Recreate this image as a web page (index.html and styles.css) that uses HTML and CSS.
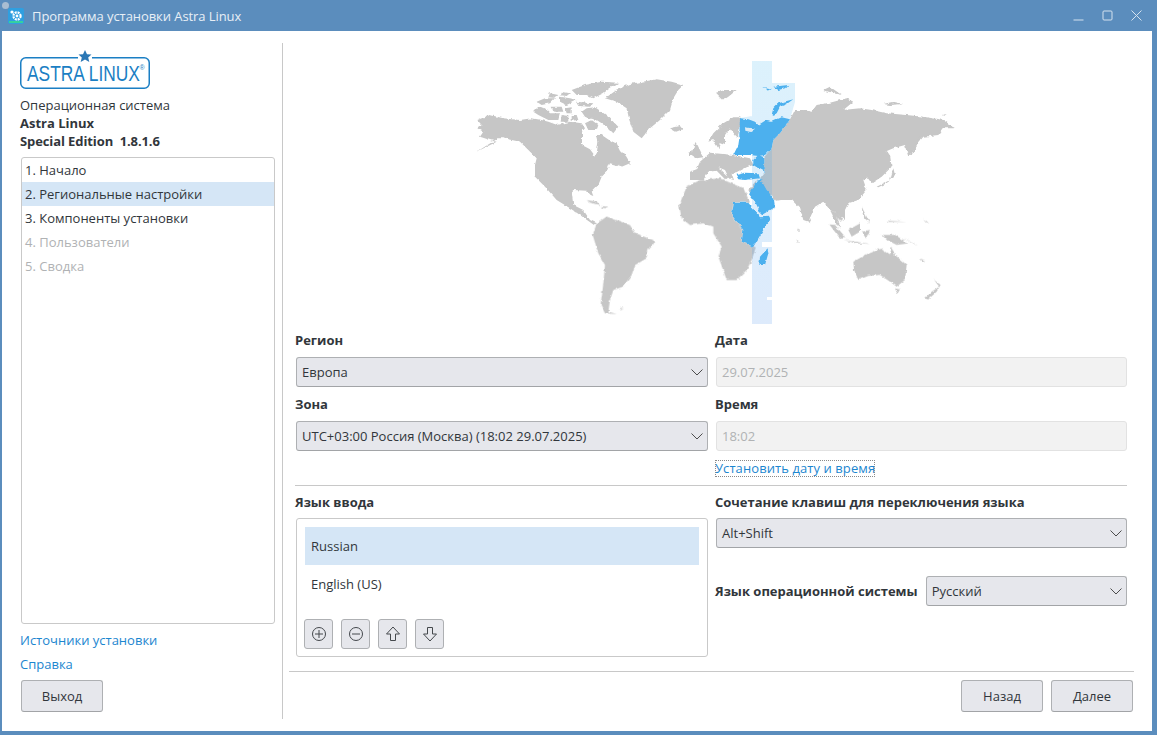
FILE: index.html
```html
<!DOCTYPE html>
<html lang="ru">
<head>
<meta charset="utf-8">
<title>Программа установки Astra Linux</title>
<link rel="stylesheet" href="styles.css">
</head>
<body>
<div class="window">
  <header class="titlebar">
    <span class="corner-dot"></span>
    <svg class="app-icon" viewBox="0 0 16 16" width="16" height="16">
      <rect width="16" height="16" rx="2" fill="#2f9fe0"/>
      <rect x="1" y="13" width="14" height="2" fill="#35d0a0"/>
      <circle cx="9" cy="8" r="3.600" fill="none" stroke="#fff" stroke-width="2.200" stroke-dasharray="2 0.850"/>
      <circle cx="9" cy="8" r="1.400" fill="#fff"/>
      <circle cx="4" cy="4" r="1.600" fill="#fff"/>
    </svg>
    <span class="title">Программа установки Astra Linux</span>
    <div class="controls">
      <svg viewBox="0 0 11 11" width="11" height="11"><path d="M0.500 10h10" stroke="#d5e2ef" fill="none"/></svg>
      <svg viewBox="0 0 11 11" width="11" height="11"><rect x="1" y="1" width="9" height="9" rx="1" stroke="#d5e2ef" fill="none"/></svg>
      <svg viewBox="0 0 11 11" width="11" height="11"><path d="M0.500 0.500l10 10M10.500 0.500l-10 10" stroke="#d5e2ef" fill="none"/></svg>
    </div>
  </header>
  <div class="content">
    <aside class="sidebar">
      <svg class="logo" viewBox="0 0 130 40" width="130" height="40">
        <rect x="0.750" y="7.750" width="128.500" height="30.500" rx="5" fill="#fff" stroke="#1b7fc4" stroke-width="1.500"/>
        <rect x="58" y="5" width="14" height="6" fill="#fff"/>
        <polygon points="65,0 67,4.200 71.500,4.500 68.200,7.500 69.300,12 65,9.600 60.700,12 61.800,7.500 58.500,4.500 63,4.200" fill="#2a77b5"/>
        <text class="logo-text" transform="translate(7 31) scale(.79 1)">ASTRA LINUX</text>
        <text class="logo-reg" x="119.500" y="20">®</text>
      </svg>
      <div class="product">
        <div>Операционная система</div>
        <div class="strong">Astra Linux</div>
        <div class="strong tight">Special Edition&nbsp; 1.8.1.6</div>
      </div>
      <ul class="steps">
        <li>1. Начало</li>
        <li class="active">2. Региональные настройки</li>
        <li>3. Компоненты установки</li>
        <li class="off">4. Пользователи</li>
        <li class="off">5. Сводка</li>
      </ul>
      <a class="link side-link">Источники установки</a>
      <a class="link side-link">Справка</a>
      <button class="btn exit">Выход</button>
    </aside>
    <main class="main">
      <div class="map-wrap">
        <svg class="map" viewBox="460 50 510 280" width="510" height="280">
          <defs>
            <linearGradient id="bandfill" x1="0" y1="0" x2="0" y2="1">
              <stop offset="0" stop-color="#45b6ee"/>
              <stop offset="1" stop-color="#4a90ea"/>
            </linearGradient>
            <filter id="rough" x="-2%" y="-2%" width="104%" height="104%" color-interpolation-filters="sRGB">
              <feTurbulence type="fractalNoise" baseFrequency="0.22" numOctaves="2" seed="4" result="n"/>
              <feDisplacementMap in="SourceGraphic" in2="n" scale="3.500" xChannelSelector="R" yChannelSelector="G"/>
              <feGaussianBlur stdDeviation="0.300"/>
            </filter>
          </defs>
          <g class="land">
            <g transform="translate(470 70) scale(.33333)">
              <path d="M22 150L60 135L100 145L150 150L185 145L215 150L235 155L262 165L300 155L335 160L345 175L336 185L336 225L360 238L375 258L380 250L385 215L380 195L395 195L425 215L440 220L450 240L468 258L480 278L460 278L440 285L420 280L410 305L395 320L385 345L365 365L370 378L362 375L350 362L310 360L305 365L310 405L340 420L360 450L380 460L372 465L330 435L300 415L260 390L225 350L195 320L195 285L200 265L185 250L150 215L100 205L85 205L20 245L80 215L60 210L30 200L40 185L22 175L35 165Z"/>
              <path d="M190 125L205 110L225 115L240 130L270 130L265 150L235 150L205 135Z"/>
              <path d="M335 125L350 115L375 112L395 125L415 140L445 170L430 190L415 175L395 160L380 150L355 145L345 140Z"/>
              <path d="M200 95L225 85L255 85L240 100L215 105Z"/>
              <path d="M270 80L300 85L320 90L290 105L270 95Z"/>
              <path d="M305 60L345 45L395 35L445 38L420 55L400 70L370 85L350 75L320 75Z"/>
              <path d="M285 115L305 112L305 130L290 130Z"/>
              <path d="M318 95L370 100L360 110L325 108Z"/>
              <path d="M305 135L320 135L325 150L305 152Z"/>
              <path d="M240 70L265 75L255 84L235 82Z"/>
              <path d="M275 65L300 70L290 78L272 76Z"/>
              <path d="M245 110L275 110L280 125L250 125Z"/>
              <path d="M275 135L295 138L295 155L272 155Z"/>
              <path d="M345 160L365 150L385 165L380 180L355 180Z"/>
              <path d="M405 85L440 60L480 42L560 28L605 35L640 45L625 60L610 85L600 120L570 150L540 175L515 205L490 185L478 150L470 115L440 95Z"/>
              <path d="M600 175L630 168L638 178L618 185Z"/>
              <path d="M440 285L470 270L480 280L455 290Z"/>
              <path d="M672 225L680 220L690 240L700 262L680 265L665 255Z"/>
              <path d="M655 245L668 240L668 255L655 255Z"/>
            </g>
            <g transform="translate(690 80) scale(.33333)">
              <path d="M78 38L105 30L140 30L115 50L100 60L90 50Z"/>
              <path d="M55 185L70 160L100 130L130 112L150 112L155 118L145 150L140 170L120 145L105 165L105 195L90 190L85 205L70 180Z"/>
              <path d="M0 300L0 275L20 268L30 245L60 218L130 225L180 235L190 255L170 262L145 275L125 280L132 300L118 296L105 270L85 262L115 290L105 298L80 272L55 275L40 300Z"/>
              <path d="M175 330L200 300L195 320L185 345Z"/>
              <path d="M300 118L315 90L340 90L365 95L380 75L420 68L470 55L490 65L460 90L510 85L545 90L590 100L650 105L700 110L760 120L795 145L760 145L745 165L700 170L680 195L655 230L645 195L610 205L585 215L600 225L605 260L575 290L545 310L530 290L520 300L530 330L505 360L475 370L465 390L465 420L440 400L420 390L400 365L375 380L355 425L340 420L330 385L305 360L270 360L258 362L245 345L225 340L210 295L225 275L222 232L245 205L250 180L270 160L285 140Z"/>
              <path d="M660 225L672 190L690 170L680 195L665 225Z"/>
              <path d="M560 320L600 300L610 265L615 285L590 310L565 322Z"/>
              <path d="M400 30L420 20L455 45L430 40Z"/>
              <path d="M580 72L610 65L640 72L600 75Z"/>
              <path d="M755 105L770 102L762 108Z"/>
            </g>
            <g transform="translate(580 190) scale(.33333)">
              <path d="M38 135L50 100L80 80L110 90L150 105L165 130L220 150L222 160L205 180L200 205L165 225L155 255L130 290L100 300L90 330L85 365L110 372L75 370L62 345L70 280L75 225L55 190Z"/>
              <path d="M297 45L320 -10L360 -30L420 -35L490 -5L510 38L462 38L455 75L490 120L485 155L527 172L515 210L500 240L470 270L440 270L415 200L425 170L400 130L400 110L370 100L330 105L305 85Z"/>
              <path d="M20 30L50 35L60 45L30 38Z"/>
              <path d="M62 48L82 50L72 55Z"/>
              <path d="M118 355L132 352L122 358Z"/>
            </g>
            <g transform="translate(780 190) scale(.33333)">
              <path d="M83 90L93 90L90 100Z"/>
              <path d="M150 60L175 70L190 90L180 95L168 80L185 115L165 100L160 80Z"/>
              <path d="M148 103L165 105L195 140L180 145Z"/>
              <path d="M190 150L270 162L230 160Z"/>
              <path d="M205 120L240 100L240 125L215 140Z"/>
              <path d="M245 50L270 100L255 85L248 70Z"/>
              <path d="M245 125L270 120L258 145Z"/>
              <path d="M305 135L345 135L385 160L350 165L320 150Z"/>
              <path d="M220 215L265 190L290 180L310 175L315 185L330 195L335 170L345 195L380 225L375 270L350 290L330 275L300 255L265 258L235 270L222 240Z"/>
              <path d="M345 295L360 298L352 312Z"/>
              <path d="M435 325L455 305L478 290L462 270L482 285L470 305L445 328Z"/>
              <path d="M370 145L395 155L415 168L385 152Z"/>
              <path d="M320 92L380 96L325 96Z"/>
              <path d="M430 85L448 100L438 96Z"/>
              <path d="M420 205L436 212L428 214Z"/>
              <path d="M55 115L60 125L55 125Z"/>
              <path d="M48 150L58 155L50 157Z"/>
            </g>
          </g>
          <path class="band" fill="url(#bandfill)" d="M752 61H772V83H795V102L790 119L772 140V324H752V116L740 118L738 137L752 150Z"/>
          <rect x="762" y="242" width="10" height="5" fill="#fff"/>
          <rect x="767" y="297" width="5" height="3" fill="#fff"/>
          <g class="zone">
            <g transform="translate(690 80) scale(.33333)">
              <path d="M150 115L175 118L195 125L205 135L225 122L245 125L275 112L300 118L285 140L270 160L250 180L245 205L225 225L205 228L180 225L165 225L130 225L145 195L148 175Z"/>
              <path class="inlet" d="M165 142L195 146L182 156L166 152Z"/>
              <path d="M190 240L205 225L222 232L225 275L205 265L190 255Z"/>
              <path d="M138 285L165 278L205 280L210 295L165 300L145 298Z"/>
              <path d="M245 105L250 85L265 70L310 58L290 72L270 80L260 100Z"/>
              <path d="M220 25L245 28L235 32Z"/>
              <path d="M250 20L295 15L285 25L265 30Z"/>
            </g>
            <g transform="translate(580 190) scale(.33333)">
              <path d="M462 38L505 38L540 82L570 80L565 95L520 170L485 155L490 120L455 75Z"/>
              <path d="M505 10L540 -35L560 0L585 30L588 50L545 75L525 35Z"/>
              <path d="M538 225L540 200L563 175L565 190L555 225Z"/>
            </g>
          </g>
        </svg>
      </div>
      <div class="form">
        <section class="top-grid">
          <label class="lbl">Регион</label>
          <label class="lbl">Дата</label>
          <div class="combo"><span>Европа</span><svg class="chev" viewBox="0 0 12 7" width="12" height="7"><path d="M0.500 0.500L6 6L11.500 0.500"/></svg></div>
          <div class="input">29.07.2025</div>
          <label class="lbl">Зона</label>
          <label class="lbl">Время</label>
          <div class="combo"><span>UTC+03:00 Россия (Москва) (18:02 29.07.2025)</span><svg class="chev" viewBox="0 0 12 7" width="12" height="7"><path d="M0.500 0.500L6 6L11.500 0.500"/></svg></div>
          <div class="input">18:02</div>
          <span></span>
          <div class="link-row"><a class="link focused">Установить дату и время</a></div>
        </section>
        <hr class="sep">
        <section class="bottom-grid">
          <div class="col">
            <label class="lbl">Язык ввода</label>
            <div class="langbox">
              <div class="lang active">Russian</div>
              <div class="lang">English (US)</div>
              <div class="tools">
                <button class="tool"><svg viewBox="0 0 16 16" width="16" height="16"><circle cx="8" cy="8" r="6.500"/><path d="M8 4v8M4 8h8"/></svg></button>
                <button class="tool"><svg viewBox="0 0 16 16" width="16" height="16"><circle cx="8" cy="8" r="6.500"/><path d="M4 8h8"/></svg></button>
                <button class="tool"><svg viewBox="0 0 16 16" width="16" height="16"><path d="M8 1L14.500 8H10.500V14.500H5.500V8H1.500Z"/></svg></button>
                <button class="tool"><svg viewBox="0 0 16 16" width="16" height="16"><path d="M8 15L14.500 8H10.500V1.500H5.500V8H1.500Z"/></svg></button>
              </div>
            </div>
          </div>
          <div class="col">
            <label class="lbl">Сочетание клавиш для переключения языка</label>
            <div class="combo"><span>Alt+Shift</span><svg class="chev" viewBox="0 0 12 7" width="12" height="7"><path d="M0.500 0.500L6 6L11.500 0.500"/></svg></div>
            <div class="os-row">
              <label class="lbl">Язык операционной системы</label>
              <div class="combo grow"><span>Русский</span><svg class="chev" viewBox="0 0 12 7" width="12" height="7"><path d="M0.500 0.500L6 6L11.500 0.500"/></svg></div>
            </div>
          </div>
        </section>
      </div>
      <hr class="sep wide">
      <footer class="footer">
        <button class="btn">Назад</button>
        <button class="btn">Далее</button>
      </footer>
    </main>
  </div>
</div>
</body>
</html>
```
FILE: styles.css
```css
* { box-sizing: border-box; }
html, body { margin: 0; height: 100%; }
body {
  background: #5b8dbd;
  font-family: "Open Sans", "Noto Sans", sans-serif;
  font-size: 13px;
  line-height: 18px;
  color: #31363b;
  overflow: hidden;
}
.window { width: 1157px; height: 735px; display: flex; flex-direction: column; }
.titlebar {
  position: relative;
  height: 31px;
  display: flex;
  align-items: center;
  padding: 0 15px 0 8px;
  color: #e8eff6;
  flex: none;
}
.corner-dot {
  position: absolute;
  left: 2px;
  top: 2px;
  width: 7px;
  height: 7px;
  border-radius: 50%;
  background: #a9bdd2;
}
.app-icon { flex: none; margin-top: 1px; }
.title { margin-left: 8px; flex: 1; letter-spacing: -0.07px; }
.controls { display: flex; gap: 18px; }
.content {
  background: #fff;
  width: 1150px;
  height: 700px;
  margin-left: 2px;
  display: flex;
  padding: 12px 18px 12px 0;
}
.sidebar {
  width: 281px;
  border-right: 1px solid #c8c8c8;
  padding: 7px 7px 7px 18px;
  display: flex;
  flex-direction: column;
  flex: none;
}
.logo { display: block; flex: none; }
.logo-text { font-family: "Liberation Sans", sans-serif; font-size: 22px; fill: #1b7fc4; }
.logo-reg { font-family: "Liberation Sans", sans-serif; font-size: 7px; fill: #1b7fc4; }
.product { margin-top: 6px; }
.strong, .lbl { font-weight: 700; }
.tight { letter-spacing: -0.1px; }
.steps {
  list-style: none;
  margin: 7px 0 0 1px;
  padding: 0;
  height: 467px;
  border: 1px solid #c9c9c9;
  border-radius: 3px;
  flex: none;
}
.steps li { height: 24px; line-height: 24px; padding-left: 3px; }
.steps .active { background: #d5e6f6; }
.steps .off { color: #b0b2b4; }
.link { color: #1c86cf; }
.side-link { display: block; height: 24px; line-height: 24px; }
.steps + .side-link { margin-top: 4px; }
.btn {
  width: 82px;
  height: 32px;
  font: inherit;
  color: inherit;
  background: #e6e7ec;
  border: 1px solid #aeb0b3;
  border-bottom-color: #a2a4a7;
  border-radius: 3px;
  padding: 0;
}
.exit { margin: 4px 0 0 1px; }
.main { flex: 1; display: flex; flex-direction: column; min-width: 0; padding-left: 6px; }
.map-wrap { height: 288px; padding-top: 7px; padding-left: 171px; flex: none; }
.map { display: block; }
.land { filter: url(#rough); }
.zone { filter: url(#rough); }
.land path { fill: #c6c6c6; }
.band { opacity: .19; }
.zone path { fill: #4cb0ee; }
.zone .inlet { fill: #dcebf5; }
.form { padding: 0 7px 0 6px; flex: none; }
.top-grid {
  display: grid;
  grid-template-columns: 413px 412px;
  grid-template-rows: 18px 30px 18px 30px 18px;
  column-gap: 7px;
  row-gap: 8px;
}
.combo {
  height: 30px;
  margin-left: 1px;
  background: #e6e7ec;
  border: 1px solid #aeb0b3;
  border-bottom-color: #a2a4a7;
  border-radius: 3px;
  display: flex;
  align-items: center;
  justify-content: space-between;
  padding: 0 4px 0 5px;
}
.chev { fill: none; stroke: #4d4d4d; stroke-width: 1; flex: none; margin-top: 1px; }
.input {
  margin-left: 1px;
  height: 30px;
  background: #f2f2f2;
  border: 1px solid #e2e2e2;
  border-radius: 3px;
  padding: 0 5px;
  line-height: 28px;
  color: #b0b2b4;
}
.focused { display: inline-block; height: 17px; line-height: 16px; letter-spacing: 0.08px; outline: 1px dotted #8a8a8a; outline-offset: -1px; }
.sep { border: 0; border-top: 1px solid #c8c8c8; margin: 8px 0 7px; height: 0; }
.bottom-grid { display: grid; grid-template-columns: 413px 412px; column-gap: 7px; }
.col { display: flex; flex-direction: column; }
.col .lbl { margin-bottom: 7px; }
.langbox {
  margin-left: 1px;
  height: 139px;
  border: 1px solid #c9c9c9;
  border-radius: 3px;
  padding: 8px 8px 7px;
  display: flex;
  flex-direction: column;
}
.lang { height: 38px; line-height: 38px; padding-left: 6px; }
.lang.active { background: #d5e6f6; }
.tools { display: flex; gap: 8px; margin-top: 16px; margin-left: -1px; }
.tool {
  width: 29px;
  height: 30px;
  padding: 0;
  background: #e6e7ec;
  border: 1px solid #aeb0b3;
  border-radius: 3px;
  display: flex;
  align-items: center;
  justify-content: center;
}
.tool svg { fill: none; stroke: #44484c; stroke-width: 1; }
.os-row { display: flex; align-items: center; margin-top: 28px; gap: 8px; }
.os-row .lbl { margin: 0; white-space: nowrap; }
.grow { flex: 1; margin-left: 0; }
.wide { margin: 14px 0 8px; flex: none; }
.footer { display: flex; justify-content: flex-end; gap: 8px; padding-right: 1px; flex: none; }
```
